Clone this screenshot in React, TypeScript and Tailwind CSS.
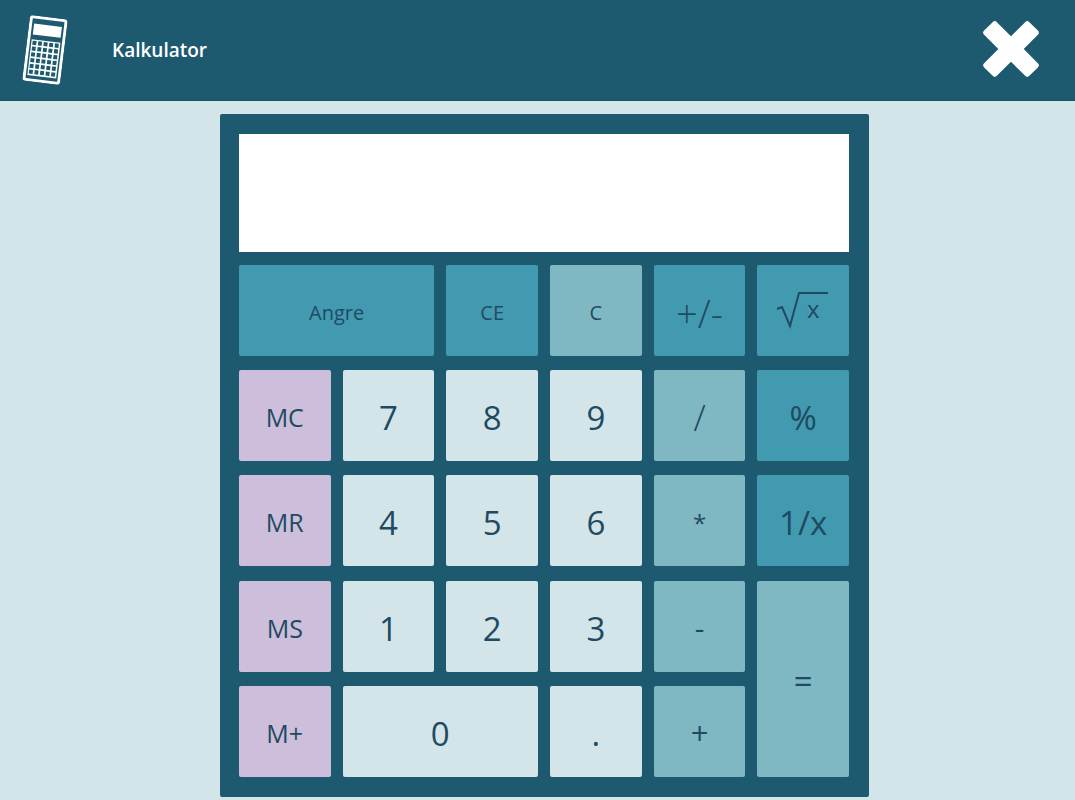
import React from "react";

const teal = "bg-[#429ab0]";
const pale = "bg-[#7fb8c3]";
const light = "bg-[#d3e5e8]";
const lilac = "bg-[#cdbfdb]";

interface KeyProps {
  label: React.ReactNode;
  color: string;
  className: string;
}

const Key: React.FC<KeyProps> = ({ label, color, className }) => (
  <button className={`${color} ${className} flex items-center justify-center rounded-[2px] pt-[4px] text-[#1e4a62] leading-none`}>
    {label}
  </button>
);

const CalcIcon = () => (
  <svg width="38" height="66" viewBox="0 0 38 66" className="ml-[4px] rotate-[7deg]" fill="none" stroke="#fff">
    <rect x="1.5" y="1.5" width="35" height="63" rx="2" strokeWidth="3" />
    <rect x="5" y="8" width="28" height="11" fill="#fff" stroke="none" />
    <rect x="4.5" y="24" width="29" height="36" fill="#fff" stroke="none" />
    {[0, 1, 2, 3, 4].map((col) =>
      [0, 1, 2, 3, 4, 5].map((row) => (
        <rect key={`${col}-${row}`} x={5.7 + col * 5.6} y={25.2 + row * 5.8} width="3.9" height="4.1" fill="#1d5a70" stroke="none" />
      ))
    )}
  </svg>
);

const CloseIcon = () => (
  <svg width="60" height="60" viewBox="-30 -30 60 60" className="ml-auto mb-[3px]" fill="#fff">
    <rect x="-32" y="-9" width="64" height="18" rx="3" transform="rotate(45)" />
    <rect x="-32" y="-9" width="64" height="18" rx="3" transform="rotate(-45)" />
  </svg>
);

const SqrtIcon = () => (
  <svg width="54" height="38" viewBox="0 0 54 38" fill="none" stroke="#1e4a62" className="-mt-[4px] overflow-visible">
    <path d="M1 17 L6 15 L14 34 L23 1 L52 1" strokeWidth="2" />
    <text x="31" y="26" fontSize="24" fill="#1e4a62" stroke="none" fontFamily="'Open Sans', sans-serif">x</text>
  </svg>
);

export default function App() {
  return (
    <div className="h-[800px] overflow-hidden bg-[#d3e5e8] font-['Open_Sans',sans-serif]">
      <header className="flex h-[101px] items-center border-b border-[#1a5268] bg-[#1d5a70] pl-[22px] pr-[34px]">
        <CalcIcon />
        <span className="ml-[48px] text-[19px] font-semibold text-white">Kalkulator</span>
        <CloseIcon />
      </header>

      <main className="ml-[220px] mt-[13px] flex h-[683px] w-[649px] flex-col rounded-[2px] bg-[#1d5a70] pl-[19px] pr-[20px] pt-[20px]">
        <div className="h-[118px] bg-white" />
        <div className="mt-[13px] grid grid-cols-6 auto-rows-[91px] gap-x-[12.2px] gap-y-[14.2px]">
          <Key label="Angre" color={teal} className="col-span-2 text-[20px]" />
          <Key label="CE" color={teal} className="text-[20px]" />
          <Key label="C" color={pale} className="text-[20px]" />
          <Key label="+/-" color={teal} className="text-[38px] font-light" />
          <Key label={<SqrtIcon />} color={teal} className="text-[33px]" />

          <Key label="MC" color={lilac} className="text-[25px]" />
          <Key label="7" color={light} className="text-[33px]" />
          <Key label="8" color={light} className="text-[33px]" />
          <Key label="9" color={light} className="text-[33px]" />
          <Key label="/" color={pale} className="text-[36px] font-light" />
          <Key label="%" color={teal} className="text-[33px]" />

          <Key label="MR" color={lilac} className="text-[25px]" />
          <Key label="4" color={light} className="text-[33px]" />
          <Key label="5" color={light} className="text-[33px]" />
          <Key label="6" color={light} className="text-[33px]" />
          <Key label="*" color={pale} className="text-[24px]" />
          <Key label="1/x" color={teal} className="text-[33px]" />

          <Key label="MS" color={lilac} className="text-[25px]" />
          <Key label="1" color={light} className="text-[33px]" />
          <Key label="2" color={light} className="text-[33px]" />
          <Key label="3" color={light} className="text-[33px]" />
          <Key label="-" color={pale} className="text-[30px]" />
          <Key label="=" color={pale} className="row-span-2 text-[33px]" />

          <Key label="M+" color={lilac} className="text-[25px]" />
          <Key label="0" color={light} className="col-span-2 text-[33px]" />
          <Key label="." color={light} className="text-[33px]" />
          <Key label="+" color={pale} className="text-[31px]" />
        </div>
      </main>
    </div>
  );
}
